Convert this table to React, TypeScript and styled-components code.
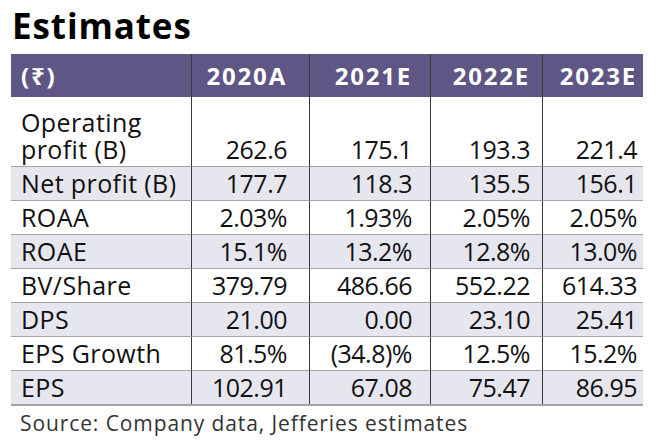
import React from "react";
import styled, { createGlobalStyle } from "styled-components";

const Global = createGlobalStyle`
  html, body { margin: 0; padding: 0; background: #ffffff; }
  body { font-family: "Open Sans", "Noto Sans", sans-serif; color: #111; }
`;

const Page = styled.div`
  width: 660px;
  height: 440px;
  overflow: hidden;
  padding: 4px 17px 0 11px;
  box-sizing: border-box;
`;

const Title = styled.h1`
  margin: 0 0 0 1px;
  font-size: 35px;
  font-weight: 700;
  line-height: 44px;
  letter-spacing: 0.9px;
  color: #000;
`;

const Table = styled.div`
  margin-top: 6px;
  display: grid;
  grid-template-columns: 180px 118px 121px 112px 101px;
  width: 632px;
`;

const Row = styled.div<{ $shade?: boolean; $head?: boolean; $tall?: boolean; $first?: boolean }>`
  display: contents;
  & > div {
    background: ${(p) => (p.$head ? "#5f5686" : p.$shade ? "#e6e6ee" : "#ffffff")};
    color: ${(p) => (p.$head ? "#ffffff" : "#111")};
    font-weight: ${(p) => (p.$head ? 700 : 400)};
    font-size: ${(p) => (p.$head ? 24 : 25)}px;
    letter-spacing: ${(p) => (p.$head ? "1.8px" : "-0.5px")};
    height: ${(p) => (p.$head ? 43 : p.$tall ? 66 : 33)}px;
    border-top: ${(p) => (p.$head || p.$first ? "0" : "1.5px solid #a4a4a8")};
    align-items: ${(p) => (p.$tall ? "flex-end" : "center")};
    padding-bottom: ${(p) => (p.$tall ? 3 : 0)}px;
  }
`;

const Cell = styled.div<{ $pr: number; $label?: boolean }>`
  display: flex;
  box-sizing: content-box;
  justify-content: ${(p) => (p.$label ? "flex-start" : "flex-end")};
  padding-left: ${(p) => (p.$label ? 10 : 0)}px;
  padding-right: ${(p) => p.$pr}px;
  border-left: ${(p) => (p.$label ? "0" : "1px solid #3a3a3a")};
  line-height: 27px;
  white-space: nowrap;
`;

const Label = styled.span`
  white-space: normal;
  width: 165px;
  letter-spacing: 0.4px;
`;

const Bottom = styled.div`
  width: 632px;
  height: 2px;
  background: #a4a4a8;
`;

const Source = styled.div`
  margin: 3px 0 0 9px;
  font-size: 21px;
  line-height: 28px;
  letter-spacing: 0.9px;
  color: #333;
`;

const pads = [0, 22, 18, 12, 6];

const rows: { label: string; vals: string[]; shade?: boolean; tall?: boolean }[] = [
  { label: "Operating profit (B)", vals: ["262.6", "175.1", "193.3", "221.4"], tall: true },
  { label: "Net profit (B)", vals: ["177.7", "118.3", "135.5", "156.1"], shade: true },
  { label: "ROAA", vals: ["2.03%", "1.93%", "2.05%", "2.05%"] },
  { label: "ROAE", vals: ["15.1%", "13.2%", "12.8%", "13.0%"], shade: true },
  { label: "BV/Share", vals: ["379.79", "486.66", "552.22", "614.33"] },
  { label: "DPS", vals: ["21.00", "0.00", "23.10", "25.41"], shade: true },
  { label: "EPS Growth", vals: ["81.5%", "(34.8)%", "12.5%", "15.2%"] },
  { label: "EPS", vals: ["102.91", "67.08", "75.47", "86.95"], shade: true },
];

export default function App() {
  return (
    <Page>
      <Global />
      <Title>Estimates</Title>
      <Table>
        <Row $head>
          <Cell $label $pr={0}>(₹)</Cell>
          {["2020A", "2021E", "2022E", "2023E"].map((h, i) => (
            <Cell key={h} $pr={pads[i + 1]}>{h}</Cell>
          ))}
        </Row>
        {rows.map((r, ri) => (
          <Row key={r.label} $shade={r.shade} $tall={r.tall} $first={ri === 0}>
            <Cell $label $pr={0}>
              <Label>{r.label}</Label>
            </Cell>
            {r.vals.map((v, i) => (
              <Cell key={i} $pr={pads[i + 1]}>{v}</Cell>
            ))}
          </Row>
        ))}
      </Table>
      <Bottom />
      <Source>Source: Company data, Jefferies estimates</Source>
    </Page>
  );
}
